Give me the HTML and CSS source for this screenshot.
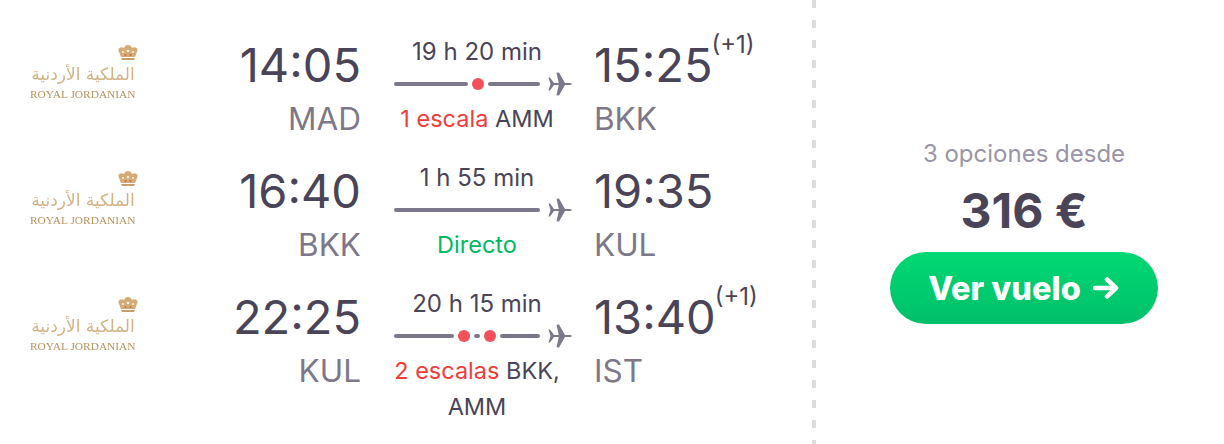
FILE: index.html
```html
<!DOCTYPE html>
<html lang="es">
<head>
<meta charset="utf-8">
<title>Ver vuelo</title>
<link rel="stylesheet" href="styles.css">
</head>
<body>
<main class="card">
  <section class="legs">
    <div class="leg">
      <div class="logo">
        <svg class="crown" viewBox="0 0 24 18"><use href="#crown"/></svg>
        <span class="arabic">الملكية الأردنية</span>
        <span class="brand">ROYAL JORDANIAN</span>
      </div>
      <div class="end dep"><div class="time">14:05</div><div class="code">MAD</div></div>
      <div class="mid">
        <div class="dur">19 h 20 min</div>
        <div class="track">
          <span class="seg s74"></span><span class="dot"></span><span class="seg s52"></span>
          <svg class="plane" viewBox="0 0 24 24"><use href="#plane"/></svg>
        </div>
        <div class="stops"><span class="red">1 escala</span> AMM</div>
      </div>
      <div class="end arr"><div class="time">15:25<sup class="plus">(+1)</sup></div><div class="code">BKK</div></div>
    </div>
    <div class="leg">
      <div class="logo">
        <svg class="crown" viewBox="0 0 24 18"><use href="#crown"/></svg>
        <span class="arabic">الملكية الأردنية</span>
        <span class="brand">ROYAL JORDANIAN</span>
      </div>
      <div class="end dep"><div class="time">16:40</div><div class="code">BKK</div></div>
      <div class="mid">
        <div class="dur">1 h 55 min</div>
        <div class="track">
          <span class="seg s146"></span>
          <svg class="plane" viewBox="0 0 24 24"><use href="#plane"/></svg>
        </div>
        <div class="stops green">Directo</div>
      </div>
      <div class="end arr"><div class="time">19:35</div><div class="code">KUL</div></div>
    </div>
    <div class="leg">
      <div class="logo">
        <svg class="crown" viewBox="0 0 24 18"><use href="#crown"/></svg>
        <span class="arabic">الملكية الأردنية</span>
        <span class="brand">ROYAL JORDANIAN</span>
      </div>
      <div class="end dep"><div class="time">22:25</div><div class="code">KUL</div></div>
      <div class="mid">
        <div class="dur">20 h 15 min</div>
        <div class="track">
          <span class="seg s60"></span><span class="dot"></span><span class="seg s6"></span><span class="dot"></span><span class="seg s40"></span>
          <svg class="plane" viewBox="0 0 24 24"><use href="#plane"/></svg>
        </div>
        <div class="stops"><span class="red">2 escalas</span> BKK,<br>AMM</div>
      </div>
      <div class="end arr"><div class="time">13:40<sup class="plus">(+1)</sup></div><div class="code">IST</div></div>
    </div>
  </section>
  <div class="divider"></div>
  <aside class="price">
    <div class="options">3 opciones desde</div>
    <div class="amount">316 €</div>
    <a class="cta" href="#">Ver vuelo <svg class="arrow" viewBox="0 0 26 22"><path d="M2 11H23M14 2.5L23 11L14 19.5"/></svg></a>
  </aside>
</main>
<svg class="defs" width="0" height="0">
  <defs>
    <g id="crown">
      <path d="M3 9C1 5 5 3 8 5C9 1 15 1 16 5C19 3 23 5 21 9C20 11 20 12 19 14H5C4 12 4 11 3 9Z" fill="#d5ab78"/>
      <path d="M5 15H19L18 17H6Z" fill="#c99d6a"/>
      <circle cx="7" cy="9" r="1.1" fill="#fff2dc"/><circle cx="12" cy="8" r="1.3" fill="#fff2dc"/><circle cx="17" cy="9" r="1.1" fill="#fff2dc"/>
      <circle cx="9.5" cy="12" r="1" fill="#c76f4a"/><circle cx="14.5" cy="12" r="1" fill="#c76f4a"/>
    </g>
    <g id="plane">
      <path d="M3 11H22Q24 11.4 24 12Q24 12.6 22 13H3Z"/>
      <path d="M8.5 .8L11 .4L17 11V13L11 23.6L8.5 23.2L11 12Z"/>
      <path d="M.5 5.5H2L6 11V13L2 18.5H.5L2.5 12Z"/>
    </g>
  </defs>
</svg>
</body>
</html>
```

FILE: styles.css
```css
* { box-sizing: border-box; }
html, body { margin: 0; padding: 0; background: #fff; }
body { font-family: Inter, "Liberation Sans", sans-serif; color: #4a4458; width: 1224px; height: 444px; overflow: hidden; }
.card { display: flex; height: 444px; }
.legs { width: 812px; padding-top: 37px; display: flex; flex-direction: column; }
.leg { display: flex; height: 126px; align-items: flex-start; }
.logo { width: 136px; padding: 6px 0 0 30px; display: flex; flex-direction: column; filter: blur(0.4px); }
.crown { width: 24px; height: 18px; margin-left: 86px; }
.arabic { font-family: "DejaVu Sans", sans-serif; font-size: 17px; line-height: 18px; margin-top: 4px; color: #d3b286; white-space: nowrap; text-align: center; }
.brand { font-family: "Liberation Serif", serif; font-size: 11.4px; line-height: 12px; margin-top: 5px; color: #b8935f; white-space: nowrap; }
.end { display: flex; flex-direction: column; }
.dep { width: 225px; align-items: flex-end; }
.arr { padding-left: 22px; align-items: flex-start; }
.time { font-size: 47px; line-height: 56px; color: #4a4458; white-space: nowrap; }
.code { font-size: 31.5px; line-height: 36px; margin-top: 8px; color: #7d7889; }
.mid { width: 178px; margin-left: 33px; display: flex; flex-direction: column; align-items: center; }
.dur { font-size: 24px; line-height: 28px; margin-top: 1px; width: 166px; text-align: center; margin-left: -12px; color: #4a4458; }
.track { display: flex; align-items: center; width: 178px; height: 26px; margin-top: 5px; }
.seg { display: block; height: 4px; background: #7d7889; border-radius: 2px; }
.s74 { width: 74px; } .s52 { width: 52px; } .s146 { width: 146px; }
.s60 { width: 60px; } .s6 { width: 6px; } .s40 { width: 40px; }
.dot { width: 12px; height: 12px; border-radius: 50%; background: #f4505a; margin: 0 4px; }
.plane { width: 24px; height: 24px; margin-left: auto; fill: #7d7889; }
.stops { font-size: 23.5px; line-height: 36px; margin-top: 4px; width: 178px; text-align: center; margin-left: -12px; color: #4a4458; }
.stops.green { color: #00b863; }
.red { color: #ee3d3d; }
.plus { font-size: 24px; line-height: 0; vertical-align: 29px; margin-left: -1px; color: #4a4458; }
.divider { width: 4px; height: 444px; background: repeating-linear-gradient(to bottom, #dcdcdf 0 8px, transparent 8px 20px); }
.price { flex: 1; display: flex; flex-direction: column; align-items: center; padding: 136px 0 0 8px; }
.options { font-size: 24px; line-height: 36px; color: #9a95a6; }
.amount { font-size: 48px; line-height: 56px; font-weight: 700; margin-top: 11px; color: #4a4458; }
.cta { display: flex; align-items: center; justify-content: center; gap: 11px; width: 268px; height: 72px; margin-top: 13px; border-radius: 36px; background: linear-gradient(to bottom, #00d873, #00bf69); color: #fff; font-size: 32.5px; font-weight: 800; text-decoration: none; }
.arrow { width: 28px; height: 22px; fill: none; stroke: #fff; stroke-width: 4.5; stroke-linecap: round; stroke-linejoin: round; }
.defs { position: absolute; }
```
